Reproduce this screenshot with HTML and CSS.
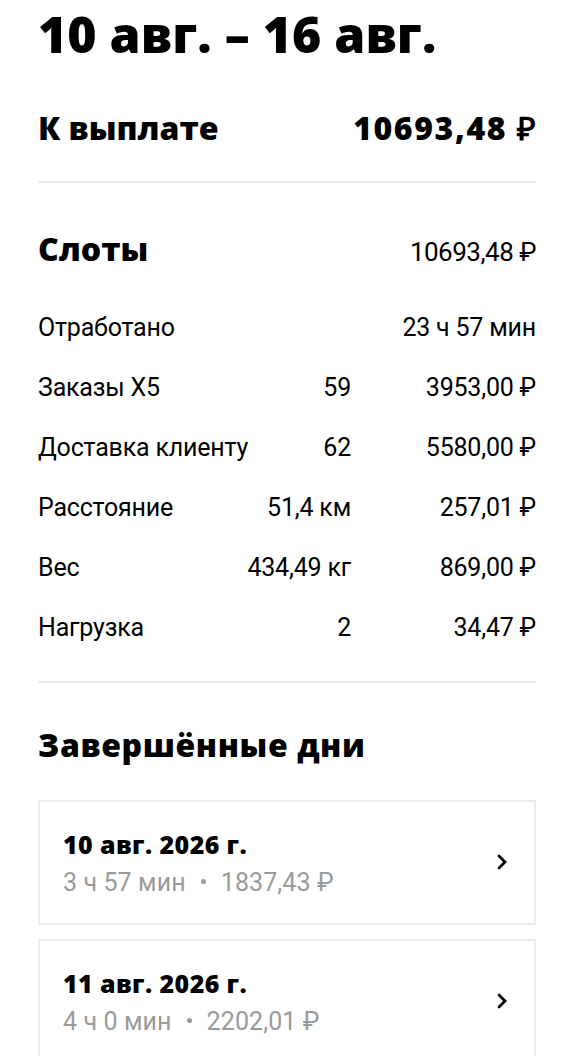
FILE: index.html
```html
<!DOCTYPE html>
<html lang="ru">
<head>
<meta charset="utf-8">
<link rel="stylesheet" href="styles.css">
</head>
<body>
<main class="page">
  <h1 class="title">10 авг. – 16 авг.</h1>

  <div class="payout">
    <span>К выплате</span>
    <span class="payout-sum">10693,48 ₽</span>
  </div>

  <hr class="divider divider-top">

  <section class="slots">
    <div class="slots-head">
      <h2 class="h2">Слоты</h2>
      <span class="slots-total">10693,48 ₽</span>
    </div>
    <div class="rows">
      <div class="row"><span class="label">Отработано</span><span class="qty"></span><span class="sum">23 ч 57 мин</span></div>
      <div class="row"><span class="label">Заказы X5</span><span class="qty">59</span><span class="sum">3953,00 ₽</span></div>
      <div class="row"><span class="label">Доставка клиенту</span><span class="qty">62</span><span class="sum">5580,00 ₽</span></div>
      <div class="row"><span class="label">Расстояние</span><span class="qty">51,4 км</span><span class="sum">257,01 ₽</span></div>
      <div class="row"><span class="label">Вес</span><span class="qty">434,49 кг</span><span class="sum">869,00 ₽</span></div>
      <div class="row"><span class="label">Нагрузка</span><span class="qty">2</span><span class="sum">34,47 ₽</span></div>
    </div>
  </section>

  <hr class="divider">

  <h2 class="h2 days-title">Завершённые дни</h2>

  <div class="cards">
    <div class="card">
      <div class="card-text">
        <div class="card-date">10 авг. 2026 г.</div>
        <div class="card-sub">3 ч 57 мин<span class="dot"></span>1837,43 ₽</div>
      </div>
      <svg class="chev" width="14" height="18" viewBox="0 0 14 18"><path d="M4 3 L10 9 L4 15" fill="none" stroke="#000" stroke-width="2.8" stroke-linecap="round" stroke-linejoin="miter"/></svg>
    </div>
    <div class="card">
      <div class="card-text">
        <div class="card-date">11 авг. 2026 г.</div>
        <div class="card-sub">4 ч 0 мин<span class="dot"></span>2202,01 ₽</div>
      </div>
      <svg class="chev" width="14" height="18" viewBox="0 0 14 18"><path d="M4 3 L10 9 L4 15" fill="none" stroke="#000" stroke-width="2.8" stroke-linecap="round" stroke-linejoin="miter"/></svg>
    </div>
  </div>
</main>
</body>
</html>
```

FILE: styles.css
```css
html, body {
  margin: 0;
  padding: 0;
  background: #fff;
  color: #000;
  height: 1056px;
  overflow: hidden;
}
.page {
  padding: 0 39px 0 38px;
  font-family: Roboto, "Liberation Sans", sans-serif;
}
.title {
  margin: 0;
  padding-top: 6px;
  font-family: "Open Sans", sans-serif;
  font-weight: 800;
  font-size: 50px;
  line-height: 56px;
  letter-spacing: 0;
}
.payout {
  display: flex;
  justify-content: space-between;
  margin-top: 46px;
  font-family: "Open Sans", sans-serif;
  font-weight: 800;
  font-size: 32px;
  line-height: 40px;
}
.payout-sum { letter-spacing: 1.6px; margin-right: -1.6px; }
.divider {
  border: 0;
  height: 2px;
  background: #ececec;
  margin: 0;
}
.divider-top { margin-top: 33px; }
.slots-head {
  display: flex;
  justify-content: space-between;
  align-items: baseline;
  margin-top: 46px;
}
.h2 {
  margin: 0;
  font-family: "Open Sans", sans-serif;
  font-weight: 800;
  font-size: 32px;
  line-height: 40px;
}
.slots-total {
  font-size: 26px;
  letter-spacing: -0.5px;
}
.rows {
  margin-top: 29px;
}
.row {
  display: grid;
  grid-template-columns: minmax(0, 1fr) max-content 185px;
  font-size: 25px;
  line-height: 60px;
  height: 60px;
  letter-spacing: -0.2px;
  white-space: nowrap;
}
.qty, .sum { text-align: right; }
.slots { margin-bottom: 23px; }
.days-title { margin-top: 42px; letter-spacing: 0.6px; }
.cards {
  margin-top: 35px;
  display: flex;
  flex-direction: column;
  gap: 14px;
}
.card {
  border: 2px solid #ececec;
  height: 125px;
  box-sizing: border-box;
  display: flex;
  align-items: center;
  justify-content: space-between;
  padding: 0 24px 0 23px;
}
.card-date {
  font-family: "Open Sans", sans-serif;
  font-weight: 800;
  font-size: 25px;
  line-height: 32px;
  letter-spacing: 0.4px;
}
.card-sub {
  margin-top: 8px;
  font-size: 25px;
  line-height: 30px;
  color: #9a9a9a;
  letter-spacing: 0.1px;
}
.dot {
  display: inline-block;
  width: 5px;
  height: 5px;
  border-radius: 50%;
  background: #9a9a9a;
  margin: 0 15px 0 15px;
  vertical-align: 7px;
}
.chev { flex: none; margin-bottom: 2px; margin-right: 1px; }
```
